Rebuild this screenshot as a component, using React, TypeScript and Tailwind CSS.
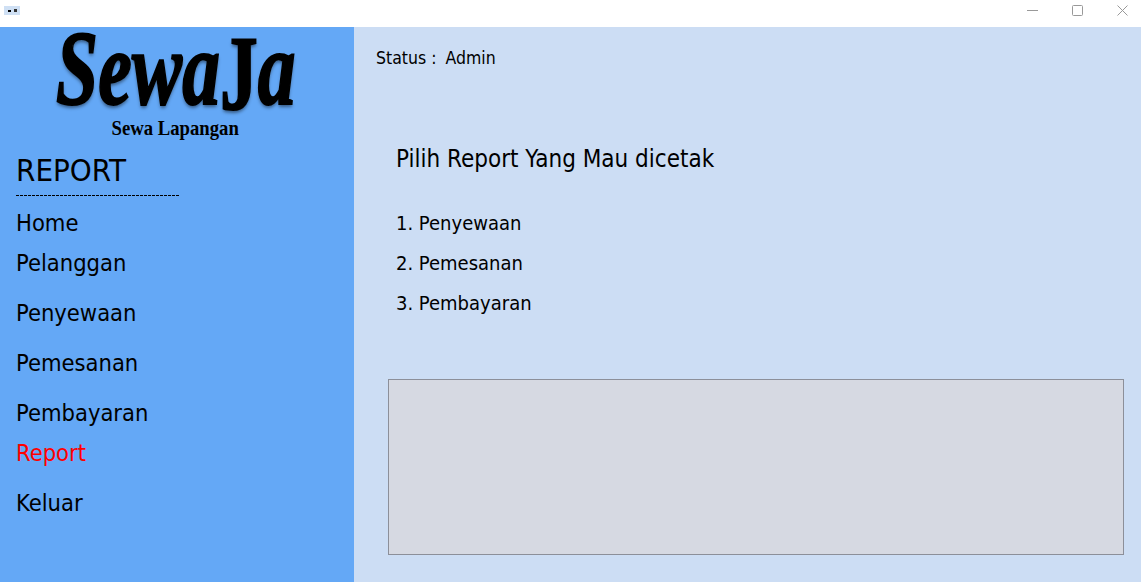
// Sidebar rows are not evenly spaced in the original form, so each keeps its own gap.
const MENU = [
  { label: 'Home', cls: 'mt-[12px] text-black' },
  { label: 'Pelanggan', cls: 'mt-[10px] text-black' },
  { label: 'Penyewaan', cls: 'mt-[20px] text-black' },
  { label: 'Pemesanan', cls: 'mt-[20px] text-black' },
  { label: 'Pembayaran', cls: 'mt-[20px] text-black' },
  { label: 'Report', cls: 'mt-[10px] text-[#ff0000]' },
  { label: 'Keluar', cls: 'mt-[20px] text-black' },
]

const REPORTS = ['1. Penyewaan', '2. Pemesanan', '3. Pembayaran']

export default function App() {
  return (
    <div className="flex h-[582px] w-[1141px] flex-col overflow-hidden bg-white font-['DejaVu_Sans',sans-serif] [font-stretch:condensed] text-black">
      {/* Window title bar */}
      <div className="flex h-[27px] shrink-0 items-start justify-between bg-white pl-1">
        <div className="mt-[6px] flex h-[9px] w-4 items-center justify-center gap-[3px] bg-[#cfe0f4]">
          <span className="h-[2px] w-[3px] bg-black" />
          <span className="h-[3px] w-[3px] bg-[#333]" />
        </div>
        <div className="mt-[5px] flex items-center gap-[34px] pr-[13px] text-[#999]">
          <svg width="11" height="11" viewBox="0 0 11 11" fill="none" stroke="currentColor">
            <path d="M0 5.5H11" />
          </svg>
          <svg width="11" height="11" viewBox="0 0 11 11" fill="none" stroke="currentColor">
            <rect x="0.5" y="0.5" width="10" height="10" rx="1" />
          </svg>
          <svg width="11" height="11" viewBox="0 0 11 11" fill="none" stroke="currentColor">
            <path d="M0.5 0.5L10.5 10.5M10.5 0.5L0.5 10.5" />
          </svg>
        </div>
      </div>

      <div className="flex min-h-0 flex-1">
        {/* Sidebar */}
        <aside className="flex w-[354px] shrink-0 flex-col bg-[#64a8f6]">
          <div className="flex h-[125px] flex-col items-center font-['Liberation_Serif',serif]">
            <div className="h-[86px] scale-x-[0.72] pr-[4px] text-[105px] leading-[84px] font-bold italic [-webkit-text-stroke:2px_black] [text-shadow:0_0_1px_#dddddd,0_3px_4px_rgba(0,0,0,0.45)]">
              Sewa<span className="inline-block translate-y-[5px] not-italic">J</span>a
            </div>
            <div className="mt-[2px] scale-x-[0.85] pr-[4px] text-[22px] leading-[26px] font-bold">Sewa Lapangan</div>
          </div>
          <div className="pl-4">
            <h1 className="text-[31px] leading-[36px] font-normal">REPORT</h1>
            <div className="mt-[7px] h-px w-[164px] bg-[repeating-linear-gradient(90deg,#000_0,#000_3px,transparent_3px,transparent_4px)]" />
            <nav className="flex flex-col">
              {MENU.map((m) => (
                <a key={m.label} className={`text-[23.5px] leading-[30px] ${m.cls}`}>
                  {m.label}
                </a>
              ))}
            </nav>
          </div>
        </aside>

        {/* Content */}
        <main className="flex min-w-0 flex-1 flex-col bg-[#ccddf4]">
          <div className="mt-[19px] ml-[22px] flex gap-[9px] text-[17.5px] leading-[24px]">
            <span>Status :</span>
            <span>Admin</span>
          </div>
          <h2 className="mt-[73px] ml-[42px] text-[24px] leading-[32px] font-normal">Pilih Report Yang Mau dicetak</h2>
          <ol className="mt-[34px] ml-[42px] flex flex-col gap-[12px]">
            {REPORTS.map((r) => (
              <li key={r} className="text-[20px] leading-[28px]">
                {r}
              </li>
            ))}
          </ol>
          <div className="mt-[62px] ml-[34px] h-[176px] w-[736px] border border-[#8c8f99] bg-[#d6d9e2]" />
        </main>
      </div>
    </div>
  )
}
